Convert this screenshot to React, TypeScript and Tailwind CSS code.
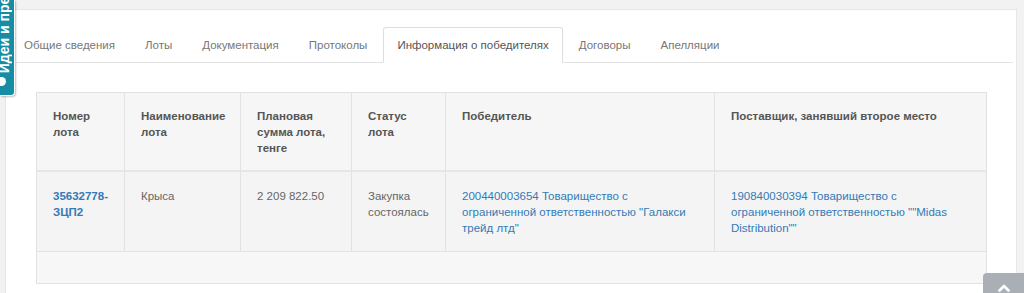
import React from "react";

const tabs = [
  "Общие сведения",
  "Лоты",
  "Документация",
  "Протоколы",
  "Информация о победителях",
  "Договоры",
  "Апелляции",
];

export default function App() {
  return (
    <div
      className="relative min-h-[293px] w-[1024px] overflow-hidden bg-[#f2f2f2] pt-[9px]"
      style={{ fontFamily: '"Liberation Sans", Arial, sans-serif' }}
    >
      {/* panel */}
      <div className="ml-[5px] w-[1012px] border border-[#e6e6e6] bg-white pb-[30px] pl-[10px] pr-[3px] pt-[17px]">
        <ul className="flex border-b border-[#e3e3e3]">
          {tabs.map((t, i) => {
            const active = i === 4;
            return (
              <li key={t} className={`-mb-px mr-[2px] ${i === 0 ? "-ml-[6px]" : ""}`}>
                <a
                  className={`block whitespace-nowrap rounded-t-[3px] border px-[13px] pb-[9px] pt-[9px] text-[11.5px] leading-[16px] ${
                    active
                      ? "border-[#dddddd] border-b-white bg-white text-[#555555]"
                      : "border-transparent text-[#777777]"
                  }`}
                >
                  {t}
                </a>
              </li>
            );
          })}
        </ul>

        {/* table */}
        <div className="ml-[20px] mt-[29px] w-[951px] border-l border-t border-[#e2e2e2] text-[11.5px] leading-[16px]">
          <div className="grid grid-cols-[88px_116px_111px_94px_269px_272px] bg-[#f6f6f6] font-bold text-[#555555]">
            {[
              "Номер лота",
              "Наименование лота",
              "Плановая сумма лота, тенге",
              "Статус лота",
              "Победитель",
              "Поставщик, занявший второе место",
            ].map((h) => (
              <div
                key={h}
                className="h-[79px] border-b-2 border-r border-[#e6e6e6] border-r-[#e2e2e2] px-[16px] pt-[15px]"
              >
                {h}
              </div>
            ))}
          </div>
          <div className="grid grid-cols-[88px_116px_111px_94px_269px_272px] bg-[#f4f4f4] text-[#666666]">
            <div className="h-[80px] border-b border-r border-[#e2e2e2] px-[16px] pt-[16px] font-bold text-[#337ab7]">
              35632778-ЗЦП2
            </div>
            <div className="h-[80px] border-b border-r border-[#e2e2e2] px-[16px] pt-[16px]">Крыса</div>
            <div className="h-[80px] border-b border-r border-[#e2e2e2] px-[16px] pt-[16px]">2 209 822.50</div>
            <div className="h-[80px] border-b border-r border-[#e2e2e2] px-[16px] pt-[16px]">
              Закупка состоялась
            </div>
            <div className="h-[80px] border-b border-r border-[#e2e2e2] px-[16px] pt-[16px] text-[#337ab7]">
              200440003654 Товарищество с ограниченной ответственностью "Галакси трейд лтд"
            </div>
            <div className="h-[80px] border-b border-r border-[#e2e2e2] px-[16px] pt-[16px] text-[#337ab7]">
              190840030394 Товарищество с ограниченной ответственностью ""Midas Distribution""
            </div>
          </div>
          <div className="h-[32px] border-b border-r border-[#e2e2e2] bg-[#f7f7f7]" />
        </div>
      </div>

      {/* feedback side tab */}
      <div className="absolute left-0 top-0 h-[96px] w-[15px] overflow-hidden rounded-br-[4px] border-b border-r border-white bg-[#168ca5] shadow-[1px_1px_2px_rgba(0,0,0,0.25)]">
        <span className="absolute bottom-[22px] left-[-3px] rotate-180 whitespace-nowrap text-[14px] font-bold leading-[15px] text-white [writing-mode:vertical-rl]">
          Идеи и предложения
        </span>
        <span className="absolute left-[-4px] top-[77px] h-[9px] w-[10px] rounded-full bg-white" />
      </div>

      {/* scroll to top */}
      <div className="absolute left-[983px] top-[273px] flex h-[40px] w-[41px] justify-center rounded-tl-[4px] bg-[#a9afb5] pt-[11px]">
        <svg width="12" height="8" viewBox="0 0 12 8">
          <path d="M1.5 6.5 L6 2 L10.5 6.5" fill="none" stroke="white" strokeWidth="2.6" strokeLinecap="round" strokeLinejoin="round" />
        </svg>
      </div>
    </div>
  );
}
